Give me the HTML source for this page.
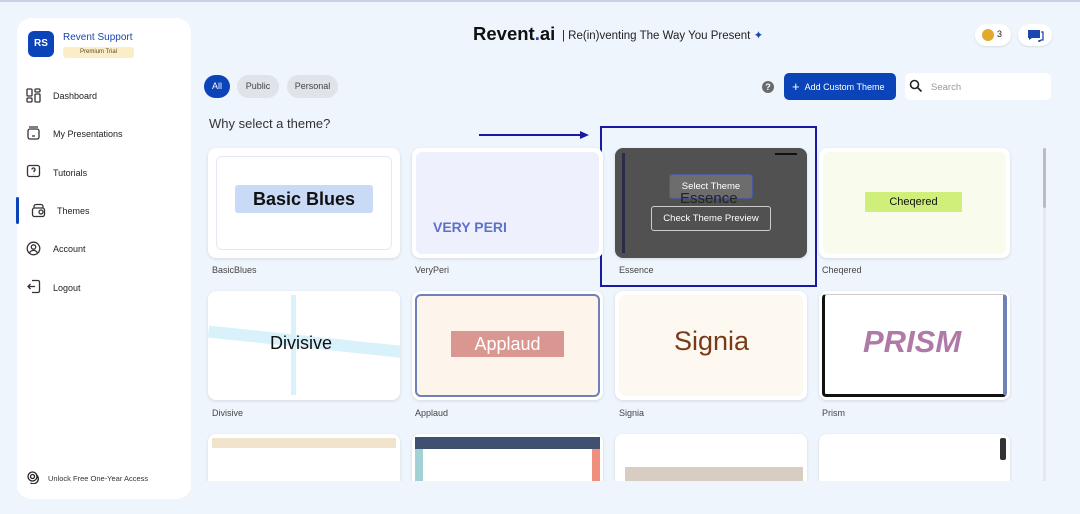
<!DOCTYPE html>
<html><head><meta charset="utf-8"><style>
*{box-sizing:border-box;margin:0;padding:0}
body{width:1080px;height:514px;overflow:hidden;background:#eff5fd;font-family:"Liberation Sans",sans-serif;position:relative;color:#222}
.a{position:absolute}
.side{left:17px;top:18px;width:174px;height:481px;background:#fff;border-radius:14px}
.nav{position:absolute;left:53px;font-size:9px;color:#222}
.sv{position:absolute;left:26px;width:15px;height:15px}
.pill{top:75px;height:23px;border-radius:12px;font-size:9px;line-height:23px;text-align:center;background:#dfe3ea;color:#444}
.card{background:#fff;border-radius:8px;box-shadow:0 1px 3px rgba(0,0,0,.12);overflow:hidden}
.in{position:absolute;left:8px;top:8px;right:8px;bottom:8px;border-radius:6px}
.lbl{font-size:9px;color:#444}
</style></head><body>
<div style="position:absolute;left:0;top:0;width:1080px;height:2px;background:#c9d2e3"></div>
<div class="a side"></div>
<div class="a" style="left:28px;top:31px;width:26px;height:26px;background:#0b44b8;border-radius:6px;color:#fff;font-size:10px;font-weight:bold;text-align:center;line-height:26px">RS</div>
<div class="a" style="left:63px;top:32px;font-size:10px;color:#1b46b0">Revent Support</div>
<div class="a" style="left:63px;top:47px;width:71px;height:11px;background:#fbeec6;border-radius:3px;font-size:6px;text-align:center;line-height:11px;color:#5a4a20">Premium Trial</div>
<svg class="sv" style="top:88px" viewBox="0 0 15 15" fill="none" stroke="#333" stroke-width="1.3"><rect x="1" y="1" width="5" height="7" rx="1"/><rect x="9" y="1" width="5" height="3" rx="1"/><rect x="9" y="6" width="5" height="8" rx="1"/><rect x="1" y="10" width="5" height="4" rx="1"/></svg>
<div class="nav" style="top:91px">Dashboard</div>
<svg class="sv" style="top:126px" viewBox="0 0 15 15" fill="none" stroke="#333" stroke-width="1.3"><rect x="2" y="3" width="11" height="10" rx="2"/><path d="M3 1h9M6 10h3"/></svg>
<div class="nav" style="top:129px">My Presentations</div>
<svg class="sv" style="top:164px" viewBox="0 0 15 15" fill="none" stroke="#333" stroke-width="1.3"><rect x="1.5" y="1.5" width="12" height="11" rx="2"/><path d="M6 5.5a1.5 1.5 0 1 1 2 1.4v1.2M7.5 10v.3"/></svg>
<div class="nav" style="top:168px">Tutorials</div>
<div class="a" style="left:16px;top:197px;width:3px;height:27px;background:#0b44b8;border-radius:2px"></div>
<svg class="sv" style="left:31px;top:203px" viewBox="0 0 15 15" fill="none" stroke="#333" stroke-width="1.3"><rect x="1.5" y="5" width="12" height="8.5" rx="2"/><path d="M3 5V3.5a2 2 0 0 1 2-2h5a2 2 0 0 1 2 2V5"/><circle cx="10" cy="9" r="2"/></svg>
<div class="nav" style="left:57px;top:206px">Themes</div>
<svg class="sv" style="top:241px" viewBox="0 0 15 15" fill="none" stroke="#333" stroke-width="1.3"><circle cx="7.5" cy="7.5" r="6.3"/><circle cx="7.5" cy="6" r="2.2"/><path d="M3.5 12c1-2 2.5-2.6 4-2.6s3 .6 4 2.6"/></svg>
<div class="nav" style="top:244px">Account</div>
<svg class="sv" style="top:279px" viewBox="0 0 15 15" fill="none" stroke="#333" stroke-width="1.3"><path d="M6 1.5h6a1.5 1.5 0 0 1 1.5 1.5v9a1.5 1.5 0 0 1-1.5 1.5H6M9 7.5H2M4.5 5l-2.5 2.5 2.5 2.5"/></svg>
<div class="nav" style="top:283px">Logout</div>

<div class="a" style="left:473px;top:23px;font-size:18.5px;font-weight:bold;color:#111">Revent<span style="color:#1b46b0">.</span>ai</div>
<div class="a" style="left:562px;top:28px;font-size:11.5px;color:#222">| Re(in)venting The Way You Present <span style="color:#1b46b0">✦</span></div>
<div class="a" style="left:975px;top:24px;width:36px;height:22px;background:#fff;border-radius:11px;box-shadow:0 1px 2px rgba(0,0,0,.1)"></div>
<div class="a" style="left:982px;top:29px;width:12px;height:12px;border-radius:50%;background:#e2a92c"></div>
<div class="a" style="left:997px;top:29px;font-size:9px">3</div>
<div class="a" style="left:1018px;top:24px;width:34px;height:22px;background:#fff;border-radius:11px;box-shadow:0 1px 2px rgba(0,0,0,.1)"></div>
<svg class="a" style="left:1027px;top:28px" width="17" height="14" viewBox="0 0 17 14"><path d="M1 2h12v8H5l-3 2V10H1z" fill="#1b46b0"/><path d="M14 4h2v8h-2l-2 2v-2" fill="none" stroke="#1b46b0" stroke-width="1.3"/></svg>

<div class="a pill" style="left:204px;width:26px;background:#0b44b8;color:#fff">All</div>
<div class="a pill" style="left:237px;width:42px">Public</div>
<div class="a pill" style="left:287px;width:51px">Personal</div>
<div class="a" style="left:209px;top:116px;font-size:13px;color:#333">Why select a theme?</div>
<div class="a" style="left:762px;top:81px;width:12px;height:12px;border-radius:50%;background:#6a6a6a;color:#fff;font-size:9px;text-align:center;line-height:12px;font-weight:bold">?</div>
<div class="a" style="left:784px;top:73px;width:112px;height:27px;background:#0b44b8;border-radius:5px;color:#fff;font-size:9px;line-height:27px;padding-left:8px"><span style="font-size:13px;vertical-align:-1px">+</span>&nbsp;&nbsp;Add Custom Theme</div>
<div class="a" style="left:905px;top:73px;width:146px;height:27px;background:#fff;border-radius:5px"></div>
<svg class="a" style="left:909px;top:79px" width="14" height="14" viewBox="0 0 14 14" fill="none" stroke="#222" stroke-width="1.6"><circle cx="5.5" cy="5.5" r="4"/><path d="M8.5 8.5l4 4"/></svg>
<div class="a" style="left:931px;top:82px;font-size:9.5px;color:#999">Search</div>

<div class="a" style="left:479px;top:134px;width:104px;height:2px;background:#1a1aa0"></div>
<div class="a" style="left:580px;top:131px;width:0;height:0;border-left:9px solid #1a1aa0;border-top:4px solid transparent;border-bottom:4px solid transparent"></div>
<div class="a" style="left:600px;top:126px;width:217px;height:161px;border:2px solid #1a1aa0"></div>

<div class="a card" style="left:208px;top:148px;width:192px;height:110px"><div class="in" style="border:1px solid #e4e8f0"></div>
<div class="a" style="left:27px;top:37px;width:138px;height:28px;background:#c9daf6;border-radius:3px;font-size:18px;font-weight:bold;text-align:center;line-height:28px;color:#111">Basic Blues</div></div>
<div class="a lbl" style="left:212px;top:265px">BasicBlues</div>
<div class="a card" style="left:412px;top:148px;width:191px;height:110px"><div class="in" style="left:4px;top:4px;right:4px;bottom:4px;background:#eef1fd"></div>
<div class="a" style="left:21px;top:71px;font-size:14px;font-weight:bold;color:#5d71c8">VERY PERI</div></div>
<div class="a lbl" style="left:415px;top:265px">VeryPeri</div>
<div class="a card" style="left:615px;top:148px;width:192px;height:110px;background:#515151">
<div class="a" style="left:7px;top:5px;width:3px;height:100px;background:#2a2d48"></div>
<div class="a" style="left:160px;top:5px;width:22px;height:2px;background:#111"></div>
<div class="a" style="left:54px;top:26px;width:84px;height:25px;background:#6d6d6d;border:1px solid #4a5a9a;border-radius:3px;color:#fff;font-size:9.5px;text-align:center;line-height:23px">Select Theme</div>
<div class="a" style="left:65px;top:42px;font-size:15px;color:#222">Essence</div>
<div class="a" style="left:36px;top:58px;width:120px;height:25px;border:1px solid #ccc;border-radius:3px;background:#515151;color:#fff;font-size:9.5px;text-align:center;line-height:23px">Check Theme Preview</div></div>
<div class="a lbl" style="left:619px;top:265px">Essence</div>
<div class="a card" style="left:819px;top:148px;width:191px;height:110px"><div class="in" style="left:4px;top:4px;right:4px;bottom:4px;background:#f9fcec"></div>
<div class="a" style="left:46px;top:44px;width:97px;height:20px;background:#d0ee7a;font-size:11px;text-align:center;line-height:20px;color:#111">Cheqered</div></div>
<div class="a lbl" style="left:822px;top:265px">Cheqered</div>

<div class="a card" style="left:208px;top:291px;width:192px;height:109px">
<div class="a" style="left:0;top:45px;width:200px;height:12px;background:#d9f1fb;transform:rotate(6deg)"></div>
<div class="a" style="left:83px;top:4px;width:5px;height:100px;background:#d9f1fb"></div>
<div class="a" style="left:62px;top:42px;font-size:18px;color:#111">Divisive</div></div>
<div class="a lbl" style="left:212px;top:408px">Divisive</div>
<div class="a card" style="left:412px;top:291px;width:191px;height:109px"><div class="in" style="left:3px;top:3px;right:3px;bottom:3px;background:#fdf5ec;border:2px solid #7080b8;border-radius:6px"></div>
<div class="a" style="left:39px;top:40px;width:113px;height:26px;background:#da9690;color:#fff;font-size:18px;text-align:center;line-height:26px">Applaud</div></div>
<div class="a lbl" style="left:415px;top:408px">Applaud</div>
<div class="a card" style="left:615px;top:291px;width:192px;height:109px"><div class="in" style="left:4px;top:4px;right:4px;bottom:4px;background:#fdf8f0"></div>
<div class="a" style="left:59px;top:35px;font-size:27px;color:#7a3a1a">Signia</div></div>
<div class="a lbl" style="left:619px;top:408px">Signia</div>
<div class="a card" style="left:819px;top:291px;width:191px;height:109px"><div class="in" style="left:3px;top:3px;right:3px;bottom:3px;border:3px solid #111;border-top:1px solid #ccc;border-right:4px solid #7080b8;border-radius:4px"></div>
<div class="a" style="left:44px;top:33px;font-size:31px;font-weight:bold;font-style:italic;color:#b07aa8">PRISM</div></div>
<div class="a lbl" style="left:822px;top:408px">Prism</div>

<div class="a card" style="left:208px;top:434px;width:192px;height:50px;border-radius:8px 8px 0 0"><div class="a" style="left:4px;top:4px;right:4px;height:10px;background:#f0e4cc"></div></div>
<div class="a card" style="left:412px;top:434px;width:191px;height:50px;border-radius:8px 8px 0 0"><div class="a" style="left:3px;top:3px;right:3px;height:12px;background:#3f5070"></div><div class="a" style="left:3px;top:15px;width:8px;height:40px;background:#a2d2d6"></div><div class="a" style="right:3px;top:15px;width:8px;height:40px;background:#f08f7d"></div></div>
<div class="a card" style="left:615px;top:434px;width:192px;height:50px;border-radius:8px 8px 0 0"><div class="a" style="left:10px;top:33px;right:4px;height:20px;background:#d8cdc2"></div></div>
<div class="a card" style="left:819px;top:434px;width:191px;height:50px;border-radius:8px 8px 0 0"><div class="a" style="right:4px;top:4px;width:6px;height:22px;background:#333;border-radius:2px"></div></div>
<div class="a" style="left:0;top:481px;width:1040px;height:33px;background:#eff5fd"></div>
<div class="a" style="left:17px;top:470px;width:174px;height:29px;background:#fff;border-radius:0 0 14px 14px"></div>
<div class="a" style="left:48px;top:474px;font-size:7.5px;color:#333">Unlock Free One-Year Access</div>
<svg class="a" style="left:27px;top:471px" width="13" height="13" viewBox="0 0 13 13" fill="none" stroke="#222" stroke-width="1.3"><circle cx="5.5" cy="5.5" r="4.5"/><circle cx="5.5" cy="5.5" r="2"/><path d="M9 3.5a4.5 4.5 0 0 1-5.5 8.5"/></svg>
<div class="a" style="left:1043px;top:148px;width:3px;height:333px;background:#e6e8ec"></div>
<div class="a" style="left:1043px;top:148px;width:3px;height:60px;background:#b8bcc4;border-radius:2px"></div>
</body></html>
